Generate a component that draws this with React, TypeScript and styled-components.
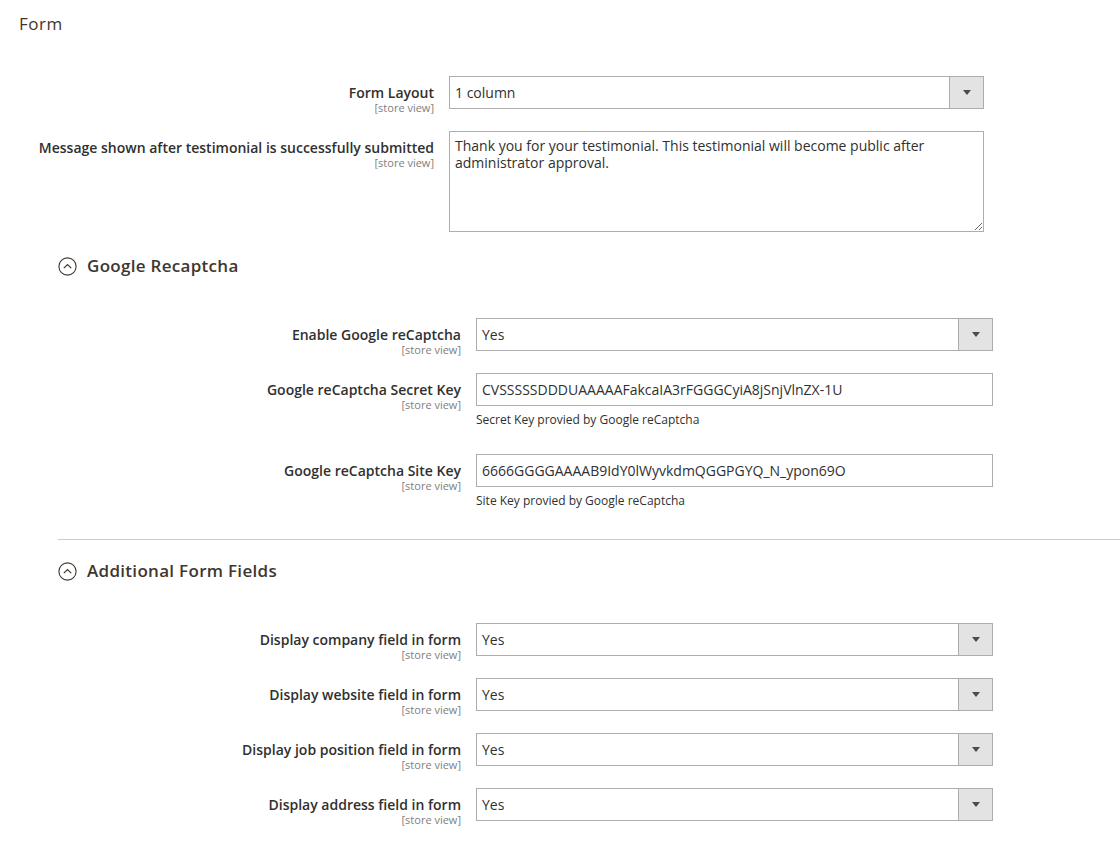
import React from "react";
import styled, { createGlobalStyle } from "styled-components";

const GlobalStyle = createGlobalStyle`
  body {
    margin: 0;
    background: #ffffff;
    font-family: "Open Sans", "Liberation Sans", sans-serif;
    color: #303030;
  }
`;

type Field = {
  label: string;
  kind: "select" | "input" | "textarea";
  value: string;
  note?: string;
};

const formFields: Field[] = [
  { label: "Form Layout", kind: "select", value: "1 column" },
  {
    label: "Message shown after testimonial is successfully submitted",
    kind: "textarea",
    value:
      "Thank you for your testimonial. This testimonial will become public after administrator approval.",
  },
];

const recaptchaFields: Field[] = [
  { label: "Enable Google reCaptcha", kind: "select", value: "Yes" },
  {
    label: "Google reCaptcha Secret Key",
    kind: "input",
    value: "CVSSSSSDDDUAAAAAFakcaIA3rFGGGCyiA8jSnjVlnZX-1U",
    note: "Secret Key provied by Google reCaptcha",
  },
  {
    label: "Google reCaptcha Site Key",
    kind: "input",
    value: "6666GGGGAAAAB9IdY0lWyvkdmQGGPGYQ_N_ypon69O",
    note: "Site Key provied by Google reCaptcha",
  },
];

const extraFields: Field[] = [
  { label: "Display company field in form", kind: "select", value: "Yes" },
  { label: "Display website field in form", kind: "select", value: "Yes" },
  { label: "Display job position field in form", kind: "select", value: "Yes" },
  { label: "Display address field in form", kind: "select", value: "Yes" },
];

export default function App() {
  return (
    <>
      <GlobalStyle />
      <Page>
        <Title>Form</Title>
        <Fieldset fields={formFields} labelWidth={434} controlWidth={535} />

        <Section>
          <SectionHeader>
            <ToggleIcon />
            <span>Google Recaptcha</span>
          </SectionHeader>
          <Fieldset fields={recaptchaFields} labelWidth={403} controlWidth={517} />
        </Section>

        <Section $divider>
          <SectionHeader>
            <ToggleIcon />
            <span>Additional Form Fields</span>
          </SectionHeader>
          <Fieldset fields={extraFields} labelWidth={403} controlWidth={517} />
        </Section>
      </Page>
    </>
  );
}

function Fieldset({
  fields,
  labelWidth,
  controlWidth,
}: {
  fields: Field[];
  labelWidth: number;
  controlWidth: number;
}) {
  return (
    <div>
      {fields.map((f) => (
        <Row key={f.label} $labelWidth={labelWidth} $controlWidth={controlWidth}>
          <LabelCell>
            <LabelText>{f.label}</LabelText>
            <Scope>[store view]</Scope>
          </LabelCell>
          <div>
            {f.kind === "select" && (
              <SelectBox>
                <SelectValue>{f.value}</SelectValue>
                <SelectArrow>
                  <Triangle />
                </SelectArrow>
              </SelectBox>
            )}
            {f.kind === "input" && <TextInput readOnly value={f.value} />}
            {f.kind === "textarea" && <TextArea readOnly value={f.value} />}
            {f.note && <Note>{f.note}</Note>}
          </div>
        </Row>
      ))}
    </div>
  );
}

function ToggleIcon() {
  return (
    <svg width="19" height="19" viewBox="0 0 19 19" fill="none">
      <circle cx="9.5" cy="9.5" r="8.6" stroke="#41362f" strokeWidth="1.1" />
      <path d="M5.8 11.2 L9.5 7.5 L13.2 11.2" stroke="#41362f" strokeWidth="1.2" />
    </svg>
  );
}

const Page = styled.div`
  padding-top: 14px;
  padding-bottom: 20px;
`;

const Title = styled.div`
  padding-left: 19px;
  font-size: 17px;
  line-height: 20px;
  letter-spacing: 0.5px;
  color: #41362f;
  margin-bottom: 42px;
`;

const Section = styled.div<{ $divider?: boolean }>`
  margin-left: 58px;
  padding-top: ${(p) => (p.$divider ? "21px" : "2px")};
  margin-top: ${(p) => (p.$divider ? "4px" : "0")};
  border-top: ${(p) => (p.$divider ? "1px solid #cccccc" : "none")};
`;

const SectionHeader = styled.div`
  display: flex;
  align-items: center;
  gap: 10px;
  font-size: 17px;
  font-weight: 600;
  line-height: 20px;
  color: #41362f;
  letter-spacing: 0.3px;
  margin-bottom: 42px;
`;

const Row = styled.div<{ $labelWidth: number; $controlWidth: number }>`
  display: grid;
  grid-template-columns: ${(p) => p.$labelWidth}px ${(p) => p.$controlWidth}px;
  align-items: start;
  column-gap: 15px;
  padding-bottom: 22px;
`;

const LabelCell = styled.div`
  height: 33px;
  box-sizing: border-box;
  text-align: right;
  padding-top: 8px;
`;

const LabelText = styled.div`
  font-size: 14px;
  font-weight: 600;
  line-height: 18px;
  color: #303030;
`;

const Scope = styled.div`
  font-size: 11px;
  line-height: 12px;
  color: #808080;
`;

const SelectBox = styled.div`
  display: flex;
  height: 33px;
  box-sizing: border-box;
  border: 1px solid #adadad;
  background: #ffffff;
`;

const SelectValue = styled.div`
  flex: 1;
  padding-left: 5px;
  font-size: 14px;
  line-height: 31px;
  color: #303030;
`;

const SelectArrow = styled.div`
  width: 33px;
  border-left: 1px solid #adadad;
  background: #e3e3e3;
  display: flex;
  align-items: center;
  justify-content: center;
`;

const Triangle = styled.span`
  width: 0;
  height: 0;
  border-left: 4px solid transparent;
  border-right: 4px solid transparent;
  border-top: 5px solid #514943;
`;

const TextInput = styled.input`
  display: block;
  width: 100%;
  height: 33px;
  box-sizing: border-box;
  border: 1px solid #adadad;
  padding: 0 5px;
  font-family: "Open Sans", "Liberation Sans", sans-serif;
  font-size: 14px;
  color: #303030;
  outline: none;
`;

const TextArea = styled.textarea`
  display: block;
  width: 100%;
  height: 101px;
  box-sizing: border-box;
  border: 1px solid #adadad;
  padding: 5px 5px;
  font-family: "Open Sans", "Liberation Sans", sans-serif;
  font-size: 14px;
  line-height: 17px;
  color: #303030;
  outline: none;
  resize: both;
`;

const Note = styled.div`
  margin-top: 6px;
  padding-bottom: 4px;
  font-size: 12px;
  line-height: 16px;
  color: #303030;
`;
